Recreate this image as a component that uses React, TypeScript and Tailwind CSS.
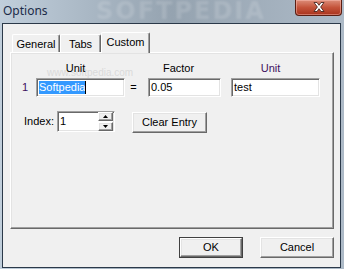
const FONT = "font-['Liberation_Sans',Arial,sans-serif] text-[11px] leading-[13px]";

const SUNKEN =
    'border border-t-[#a0a0a0] border-l-[#a0a0a0] border-r-white border-b-white bg-white shadow-[inset_1px_1px_0_#696969,inset_-1px_-1px_0_#e3e3e3]';

const RAISED =
    'border border-t-white border-l-white border-r-[#696969] border-b-[#696969] bg-[#f0f0f0] shadow-[inset_-1px_-1px_0_#a0a0a0,inset_1px_1px_0_#e3e3e3]';

function TextBox({ width, children }: { width: string; children: React.ReactNode }) {
    return (
        <div className={`${SUNKEN} ${width} h-[19px] flex items-center pl-[2px] text-black`}>
            {children}
        </div>
    );
}

function Tab({ label, selected }: { label: string; selected?: boolean }) {
    return (
        <div
            className={
                selected
                    ? 'relative z-10 -mb-px h-[21px] w-[49px] flex items-start justify-center pt-[3px] rounded-t-[2px] border border-b-0 border-t-white border-l-white border-r-[#696969] bg-[#f0f0f0] shadow-[inset_-1px_0_0_#a0a0a0]'
                    : 'h-[18px] flex items-start justify-center pt-[3px] rounded-t-[2px] border border-b-0 border-t-white border-l-white border-r-[#696969] bg-[#f0f0f0] shadow-[inset_-1px_0_0_#a0a0a0]'
            }
        >
            {label}
        </div>
    );
}

function SpinArrow({ up }: { up?: boolean }) {
    return (
        <div className={`${RAISED} w-[15px] h-[9px] flex items-center justify-center`}>
            <svg width="5" height="3" viewBox="0 0 5 3">
                {up ? <path d="M2.5 0 L5 3 L0 3 Z" fill="#000" /> : <path d="M0 0 L5 0 L2.5 3 Z" fill="#000" />}
            </svg>
        </div>
    );
}

export default function App() {
    return (
        <div className={`${FONT} relative w-[344px] h-[269px] overflow-hidden flex flex-col bg-gradient-to-r from-[#c0cedb] via-[#95a3b0] to-[#adbac7]`}>
            {/* title bar */}
            <div className="relative h-[23px] flex items-center pl-[3px]">
                <span className="pointer-events-none absolute left-[96px] top-0 font-['DejaVu_Sans',sans-serif] font-bold text-[24px] leading-[22px] tracking-[2px] text-white/15 blur-[1px]">
                    SOFTPEDIA
                </span>
                <span className="relative font-['Noto_Sans',sans-serif] text-[12px] leading-[16px] text-[#1b2b48] -mt-[1px]">
                    Options
                </span>
                <div className="absolute left-[295px] top-0 w-[47px] h-[16px] rounded-b-[4px] border border-t-0 border-[#5a1e12] bg-gradient-to-b from-[#dc8c78] via-[#c4533a] to-[#a8321c] shadow-[inset_0_0_0_1px_rgba(255,200,190,0.45)] flex items-center justify-center">
                    <svg width="12" height="10" viewBox="0 0 12 10" className="-mt-[2px]">
                        <path d="M1 0.5 H4 L6 3.3 L8 0.5 H11 L7.6 5 L11 9.5 H8 L6 6.7 L4 9.5 H1 L4.4 5 Z" fill="#fff" stroke="#3a1a14" strokeWidth="0.8" />
                    </svg>
                </div>
            </div>

            {/* client area */}
            <div className="ml-[2px] w-[339px] h-[245px] border border-[#2b3949] bg-[#f0f0f0] flex flex-col text-black">
                {/* tabs */}
                <div className="ml-[9px] mt-[8px] h-[20px] flex items-end">
                    <div className="w-[48px]"><Tab label="General" /></div>
                    <div className="w-[41px]"><Tab label="Tabs" /></div>
                    <Tab label="Custom" selected />
                </div>

                {/* panel */}
                <div className="relative ml-[7px] w-[324px] h-[177px] border border-t-white border-l-white border-r-[#696969] border-b-[#696969] shadow-[inset_-1px_-1px_0_#a0a0a0,inset_1px_1px_0_#e3e3e3] flex flex-col">
                    <span className="pointer-events-none absolute left-[36px] top-[14px] text-[10px] leading-[11px] text-[#dadada]">
                        www.softpedia.com
                    </span>

                    {/* header row */}
                    <div className="relative mt-[9px] h-[13px] flex">
                        <div className="ml-[20px] w-[89px] text-center">Unit</div>
                        <div className="ml-[22px] w-[73px] text-center">Factor</div>
                        <div className="ml-[11px] w-[89px] text-center text-[#3d0f5e]">Unit</div>
                    </div>

                    {/* input row */}
                    <div className="relative mt-[3px] h-[19px] flex items-center">
                        <div className="ml-[11px] w-[14px] text-[#3d0f5e]">1</div>
                        <TextBox width="w-[89px]">
                            <span className="bg-[#3399ff] text-white">Softpedia</span>
                            <span className="w-px h-[13px] bg-black" />
                        </TextBox>
                        <div className="w-[17px] text-center">=</div>
                        <div className="ml-[6px]">
                            <TextBox width="w-[73px]">0.05</TextBox>
                        </div>
                        <div className="ml-[10px]">
                            <TextBox width="w-[89px]">test</TextBox>
                        </div>
                    </div>

                    {/* index row */}
                    <div className="mt-[14px] h-[22px] flex items-start">
                        <div className="ml-[13px] w-[33px] h-[21px] flex items-center">Index:</div>
                        <div className={`${SUNKEN} w-[58px] h-[21px] flex items-center justify-between pl-[2px] pr-px bg-[#f0f0f0]`}>
                            <span>1</span>
                            <div className="flex flex-col gap-px">
                                <SpinArrow up />
                                <SpinArrow />
                            </div>
                        </div>
                        <button className={`${RAISED} ml-[17px] mt-px w-[75px] h-[21px] flex items-center justify-center`}>
                            Clear Entry
                        </button>
                    </div>
                </div>

                {/* dialog buttons */}
                <div className="mt-[8px] flex">
                    <div className="ml-[176px] w-[64px] h-[21px] border border-[#404040]">
                        <button className={`${RAISED} w-full h-full flex items-center justify-center`}>OK</button>
                    </div>
                    <button className={`${RAISED} ml-[17px] w-[74px] h-[21px] flex items-center justify-center`}>
                        Cancel
                    </button>
                </div>
            </div>
        </div>
    );
}
